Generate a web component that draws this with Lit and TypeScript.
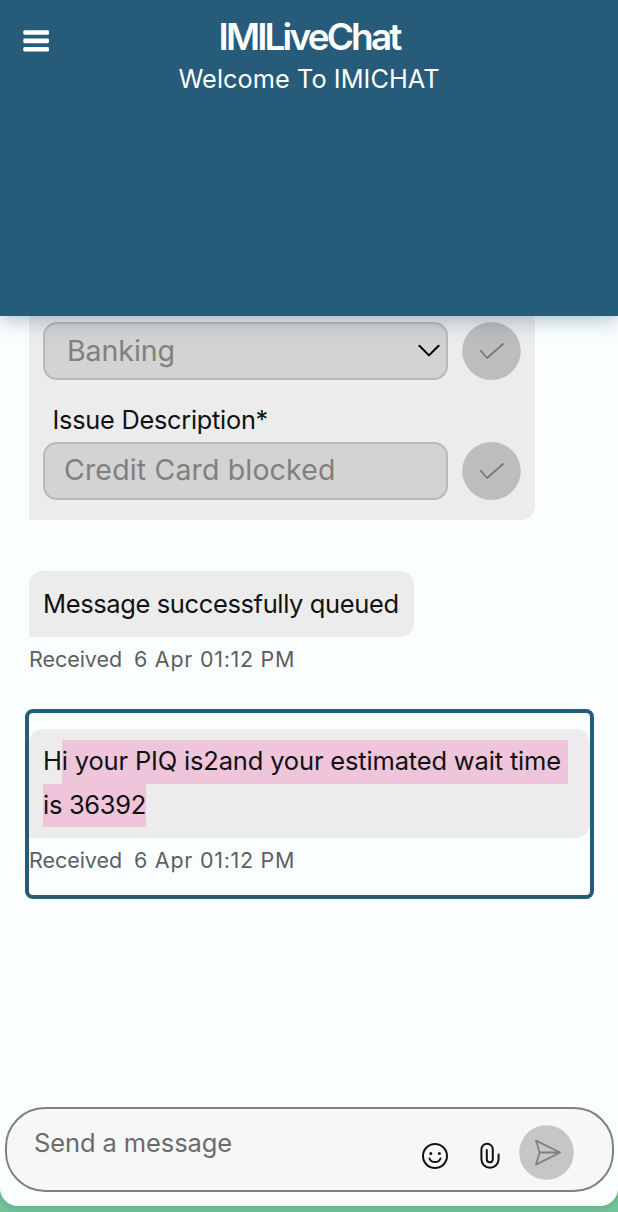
import { LitElement, html, css, svg } from "lit";
import { customElement } from "lit/decorators.js";

const check = svg`<path d="M18.6 28.8 L25.1 36 L41 22" fill="none" stroke="#777" stroke-width="1.7" stroke-linecap="round" stroke-linejoin="round"/>`;

@customElement("chat-header")
class ChatHeader extends LitElement {
  static styles = css`
    :host {
      display: grid;
      grid-template-columns: 72px 1fr 72px;
      align-items: start;
      height: 316px;
      background: #265c7a;
      color: #fff;
      box-shadow: 0 1px 22px rgba(20, 70, 95, 0.42);
      box-sizing: border-box;
    }
    .menu { display: block; margin: 30px 0 0 23px; }
    .titles { text-align: center; white-space: nowrap; }
    .title { margin: 14px 0 0; font-size: 37px; line-height: 46px; font-weight: 600; letter-spacing: -2.85px; }
    .subtitle { margin: 0; padding-top: 3px; font-size: 25.3px; line-height: 32px; letter-spacing: 0.06px; }
  `;
  render() {
    return html`
      <svg class="menu" width="27" height="23" viewBox="0 0 27 23" fill="#fff">
        <rect x=".3" y=".2" width="25.7" height="4.6" rx="1.4" />
        <rect x=".3" y="8.6" width="25.7" height="4.6" rx="1.4" />
        <rect x=".3" y="17" width="25.7" height="4.6" rx="1.4" />
      </svg>
      <div class="titles">
        <h1 class="title">IMILiveChat</h1>
        <p class="subtitle">Welcome To IMICHAT</p>
      </div>
    `;
  }
}

@customElement("chat-form")
class ChatForm extends LitElement {
  static styles = css`
    :host {
      display: block;
      width: 506px;
      height: 204px;
      box-sizing: border-box;
      padding: 6px 14px 0;
      background: #ececec;
      border-radius: 0 0 14px 0;
    }
    .row { display: flex; gap: 14px; align-items: center; }
    .field {
      display: flex;
      justify-content: space-between;
      box-sizing: border-box;
      width: 405px;
      height: 58px;
      border: 2px solid #b9b9b9;
      border-radius: 14px;
      background: #d3d3d3;
      color: #808080;
      font-size: 28.5px;
      line-height: 54px;
      white-space: nowrap;
    }
    .select { padding: 0 6px 0 22px; }
    .input { padding-left: 19px; line-height: 51px; }
    .value { letter-spacing: 0.15px; }
    .banking { letter-spacing: -0.05px; }
    .label { padding: 22px 0 0 9.5px; height: 40px; font-size: 25.3px; line-height: 35px; color: #111; white-space: nowrap; letter-spacing: -0.24px; }
    .arrow { margin-top: 20px; }
    .ok { display: block; flex: none; }
  `;
  render() {
    const ok = html`<svg class="ok" width="59" height="58" viewBox="0 0 59 58"><ellipse cx="29.5" cy="29" rx="29.3" ry="29" fill="#bdbdbd" />${check}</svg>`;
    return html`
      <div class="row">
        <div class="field select">
          <span class="value banking">Banking</span>
          <svg class="arrow" width="22" height="15" viewBox="0 0 22 15" fill="none" stroke="#000" stroke-width="2" stroke-linecap="round" stroke-linejoin="round"><path d="M1.4 1.8 L11 11.4 L20.6 1.8" /></svg>
        </div>
        ${ok}
      </div>
      <div class="label">Issue Description*</div>
      <div class="row">
        <div class="field input"><span class="value">Credit Card blocked</span></div>
        ${ok}
      </div>
    `;
  }
}

@customElement("chat-composer")
class ChatComposer extends LitElement {
  static styles = css`
    :host {
      display: flex;
      box-sizing: border-box;
      width: 609px;
      height: 85px;
      margin-left: 5px;
      padding-left: 27px;
      border: 2px solid #808080;
      border-radius: 40px;
      background: #f7f7f7;
    }
    .hint { flex: 1; font-size: 25.5px; line-height: 68px; color: #6b6b6b; white-space: nowrap; letter-spacing: -0.1px; }
    .emoji { margin: 33px 31.5px 0 0; }
    .clip { margin: 33px 19.5px 0 0; }
    .send { margin: 15.5px 38px 0 0; }
    svg { display: block; flex: none; }
  `;
  render() {
    return html`
      <span class="hint">Send a message</span>
      <svg class="emoji" width="26" height="28" viewBox="0 0 26 28" fill="none" stroke="#111" stroke-width="2" stroke-linecap="round">
        <circle cx="13" cy="14" r="12" />
        <path d="M7.5 16.5 C9.2 21.2 16.8 21.2 18.5 16.5" />
        <circle cx="8.8" cy="11.4" r="1.5" fill="#111" stroke="none" />
        <circle cx="17.4" cy="11.4" r="1.5" fill="#111" stroke="none" />
      </svg>
      <svg class="clip" width="20" height="28" viewBox="0 0 20 28" fill="none" stroke="#111" stroke-width="2" stroke-linecap="round">
        <path d="M6.8 8 V17.3 A3 3 0 0 0 12.8 17.3 V7.4 A5.7 5.7 0 0 0 1.4 7.4 V17.2 A8.6 8.6 0 0 0 18.6 17.2 V12.6" />
      </svg>
      <svg class="send" width="55" height="55" viewBox="0 0 55 55">
        <circle cx="27.5" cy="27.5" r="27.3" fill="#c6c6c6" />
        <path d="M17 15.6 L41.2 27.5 L17 39.6 L20.6 27.5 Z M20.6 27.5 H41.2" fill="none" stroke="#808080" stroke-width="1.8" stroke-linejoin="round" />
      </svg>
    `;
  }
}

@customElement("app-root")
class AppRoot extends LitElement {
  static styles = css`
    :host {
      display: block;
      width: 618px;
      height: 1212px;
      overflow: hidden;
      background: #75c49b;
      font-family: Inter, "Liberation Sans", sans-serif;
    }
    .window {
      display: flex;
      flex-direction: column;
      height: 1206px;
      background: #fbfeff;
      border-radius: 0 0 18px 18px;
      box-shadow: 0 0 12px rgba(50, 90, 70, 0.3);
    }
    .head { flex: none; position: relative; z-index: 1; }
    .thread { flex: 1; min-height: 0; padding-left: 29px; }
    .bubble {
      width: max-content;
      box-sizing: border-box;
      background: #ececec;
      border-radius: 14px 14px 14px 0;
      color: #111;
      font-size: 25.5px;
      white-space: nowrap;
    }
    .queued { width: 385px; height: 66px; margin-top: 51px; padding-left: 14px; line-height: 65px; letter-spacing: -0.38px; }
    .meta { display: flex; gap: 12px; font-size: 21.5px; line-height: 28px; color: #5e5e5e; white-space: pre; padding-top: 8px; }
    .state { letter-spacing: -0.05px; }
    .time { letter-spacing: 0.72px; }
    .focused {
      box-sizing: border-box;
      width: 569px;
      height: 190px;
      margin: 36px 0 0 -4px;
      padding-top: 16px;
      border: 4px solid #265c7a;
      border-radius: 8px;
    }
    .position { width: 561px; height: 109px; padding: 11px 0 0 14px; letter-spacing: -0.17px; }
    .line { display: flex; line-height: 42.5px; height: 43.5px; }
    .second { letter-spacing: -0.3px; }
    .mark { background: #eec5da; white-space: pre; }
    .composer { flex: none; margin-bottom: 14px; }
  `;
  private meta() {
    return html`<div class="meta"><span class="state">Received</span><span class="time">6 Apr 01:12 PM</span></div>`;
  }
  render() {
    return html`
      <main class="window">
        <chat-header class="head"></chat-header>
        <section class="thread">
          <chat-form></chat-form>
          <div class="bubble queued">Message successfully queued</div>
          ${this.meta()}
          <div class="focused">
            <div class="bubble position">
              <div class="line"><span>H</span><span class="mark">i your PIQ is2and your estimated wait time </span></div>
              <div class="line second"><span class="mark">is 36392</span></div>
            </div>
            ${this.meta()}
          </div>
        </section>
        <chat-composer class="composer"></chat-composer>
      </main>
    `;
  }
}
